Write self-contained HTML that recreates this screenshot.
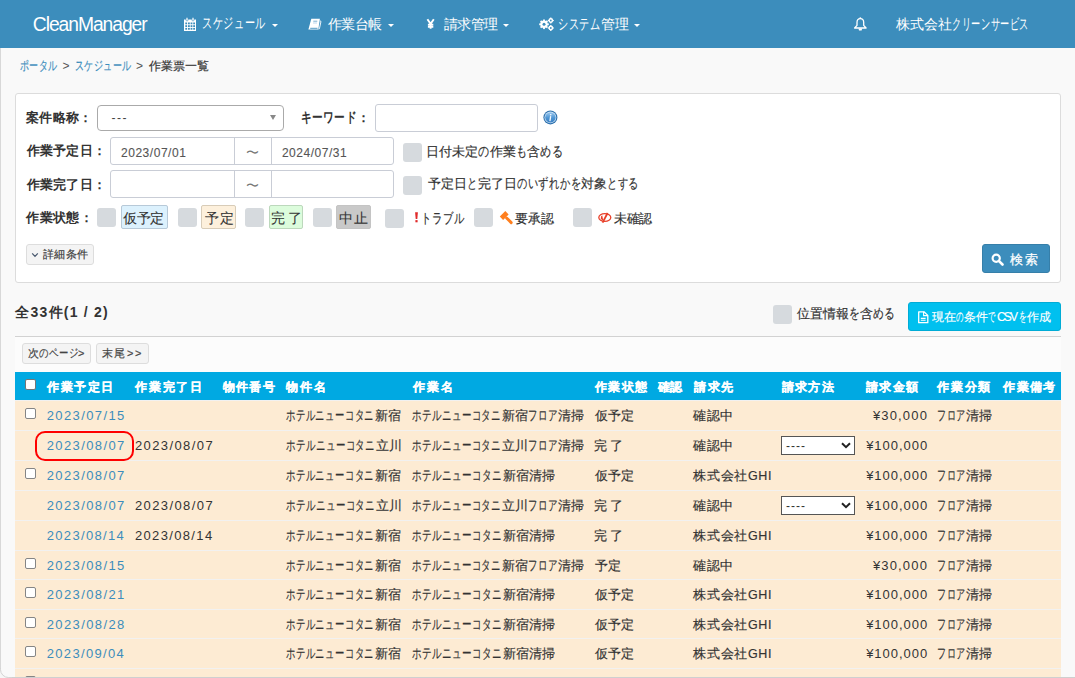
<!DOCTYPE html>
<html><head><meta charset="utf-8">
<style>
html,body{margin:0;padding:0;}
body{width:1075px;height:678px;overflow:hidden;position:relative;background:#f9f9f9;font-family:"Liberation Sans",sans-serif;}
div,svg{position:absolute;box-sizing:border-box;}
.t{position:absolute;white-space:nowrap}.kr{display:inline-block}.ki{display:inline-block;transform-origin:0 0}
#nav{left:0;top:0;width:1075px;height:48px;background:#3c8dbc;}
.caret{width:0;height:0;border-left:3px solid transparent;border-right:3px solid transparent;border-top:3px solid #fff;}
#panel{left:15px;top:93px;width:1046px;height:190px;background:#fff;border:1px solid #dcdcdc;border-radius:3px;}
.inp{background:#fff;border:1px solid #c9cdd6;border-radius:3px;}
.icb{width:19px;height:19px;background:#d6dade;border-radius:3px;}
.lab{height:24px;border:1px solid #c8c8c8;border-radius:2px;}
.btn{background:#f4f4f4;border:1px solid #ddd;border-radius:3px;}
#tbl{left:15px;top:337px;width:1046px;height:341px;background:#fcfcfc;}
#thead{left:15px;top:372px;width:1046px;height:28px;background:#00a9e2;}
.row{left:15px;width:1046px;background:#fdebd3;}
.sep{left:15px;width:1046px;height:1px;background:#f2f1f0;}
.ncb{left:25px;width:11px;height:11px;background:#fff;border:1px solid #858585;border-radius:2px;}
.nsel{left:781px;width:74px;height:19px;background:#fff;border:1px solid #555;}
.dash{position:absolute;left:4px;top:1px;font-size:12px;line-height:16px;color:#333;letter-spacing:1px;}
.chev{left:59px;top:5px;}
</style></head><body>
<div id="nav"></div>
<!-- calendar icon -->
<svg style="left:183px;top:17px" width="14" height="15" viewBox="0 0 14 15">
 <rect x="1" y="2.5" width="12" height="11.5" fill="#fff"/>
 <rect x="3" y="0.5" width="2" height="3.5" rx="1" fill="#fff" stroke="#3c8dbc" stroke-width="0.6"/>
 <rect x="9" y="0.5" width="2" height="3.5" rx="1" fill="#fff" stroke="#3c8dbc" stroke-width="0.6"/>
 <g fill="#3c8dbc">
  <rect x="2.3" y="5.5" width="1.8" height="1.8"/><rect x="5" y="5.5" width="1.8" height="1.8"/><rect x="7.6" y="5.5" width="1.8" height="1.8"/><rect x="10.2" y="5.5" width="1.8" height="1.8"/>
  <rect x="2.3" y="8.2" width="1.8" height="1.8"/><rect x="5" y="8.2" width="1.8" height="1.8"/><rect x="7.6" y="8.2" width="1.8" height="1.8"/><rect x="10.2" y="8.2" width="1.8" height="1.8"/>
  <rect x="2.3" y="10.9" width="1.8" height="1.8"/><rect x="5" y="10.9" width="1.8" height="1.8"/><rect x="7.6" y="10.9" width="1.8" height="1.8"/><rect x="10.2" y="10.9" width="1.8" height="1.8"/>
 </g>
</svg>
<div class="caret" style="left:272px;top:24px"></div>
<!-- book icon -->
<svg style="left:300px;top:10px" width="30" height="28" viewBox="0 0 30 28">
 <path d="M11.3 8.7 H19.9 L18.3 19.6 H8.4 Z" fill="#fff"/>
 <path d="M19.9 10.8 L21 11.4 L19.4 18.8 L18.6 19" stroke="#fff" stroke-width="0.9" fill="none"/>
 <path d="M10.2 18.3 H17.5" stroke="#3c8dbc" stroke-width="0.9"/>
 <rect x="13.3" y="10.6" width="4" height="1.3" fill="#9cc3dc"/>
 <rect x="13" y="12.4" width="4" height="1.2" fill="#c9def0"/>
</svg>
<div class="caret" style="left:388px;top:24px"></div>
<!-- yen -->
<svg style="left:420px;top:10px" width="25" height="28" viewBox="0 0 25 28">
 <path d="M7.4 9.2 L10.6 13.8 L13.8 9.2 M10.6 13.8 V18.8 M7.9 14.6 H13.3 M7.9 16.7 H13.3" stroke="#fff" stroke-width="1.9" fill="none"/>
</svg>
<div class="caret" style="left:503px;top:24px"></div>
<!-- gears -->
<svg style="left:538px;top:17px" width="16" height="14" viewBox="0 0 16 14">
 <g fill="#fff">
  <circle cx="6" cy="7.3" r="3.7"/>
  <g id="tth"><rect x="5.1" y="2.5" width="1.8" height="9.6"/><rect x="5.1" y="2.5" width="1.8" height="9.6" transform="rotate(45 6 7.3)"/><rect x="5.1" y="2.5" width="1.8" height="9.6" transform="rotate(90 6 7.3)"/><rect x="5.1" y="2.5" width="1.8" height="9.6" transform="rotate(135 6 7.3)"/></g>
  <circle cx="12.8" cy="3.5" r="2.4"/><circle cx="12.8" cy="11" r="2.4"/>
  <rect x="12.2" y="0.5" width="1.2" height="6"/><rect x="9.8" y="2.9" width="6" height="1.2"/>
  <rect x="12.2" y="8" width="1.2" height="6"/><rect x="9.8" y="10.4" width="6" height="1.2"/>
 </g>
 <circle cx="6" cy="7.3" r="1.5" fill="#3c8dbc"/>
 <circle cx="12.8" cy="3.5" r="0.9" fill="#3c8dbc"/><circle cx="12.8" cy="11" r="0.9" fill="#3c8dbc"/>
</svg>
<div class="caret" style="left:634px;top:24px"></div>
<!-- bell -->
<svg style="left:853px;top:16px" width="15" height="16" viewBox="0 0 15 16">
 <path d="M7.3 2.7 C5.1 2.7 4 4.4 4 6.6 V9.4 L1.6 12 H13.1 L10.7 9.4 V6.6 C10.7 4.4 9.6 2.7 7.3 2.7 Z" stroke="#fff" stroke-width="1.3" fill="none" stroke-linejoin="round"/>
 <path d="M5.5 12.5 H9.1 L8.6 14.6 H6 Z" fill="#fff"/>
 <circle cx="7.3" cy="2.2" r="0.9" fill="#fff"/>
</svg>

<div id="panel"></div>
<!-- select -->
<div class="inp" style="left:97px;top:105px;width:187px;height:26px;border-color:#aaa;border-radius:4px"></div>
<div style="left:270px;top:115px;width:0;height:0;border-left:3px solid transparent;border-right:3px solid transparent;border-top:5px solid #888"></div>
<div class="inp" style="left:375px;top:104px;width:163px;height:28px"></div>
<!-- info icon -->
<svg style="left:542px;top:109px" width="17" height="17" viewBox="0 0 17 17">
 <defs><linearGradient id="ig" x1="0" y1="0" x2="0" y2="1"><stop offset="0" stop-color="#9ccaf0"/><stop offset="0.55" stop-color="#4d95d4"/><stop offset="1" stop-color="#3a80c4"/></linearGradient></defs>
 <circle cx="8.4" cy="8.4" r="7" fill="#2b70ad"/>
 <circle cx="8.4" cy="8.4" r="5.9" fill="#cfe3f5"/>
 <circle cx="8.4" cy="8.4" r="5.2" fill="url(#ig)"/>
 <ellipse cx="8.7" cy="5.8" rx="0.9" ry="0.8" fill="#f4f8fc"/>
 <path d="M8.6 7.6 L8 11.6" stroke="#f4f8fc" stroke-width="1.3" stroke-linecap="round"/>
</svg>
<!-- date group 1 -->
<div class="inp" style="left:110px;top:137px;width:284px;height:28px"></div>
<div style="left:234px;top:138px;width:1px;height:26px;background:#c9cdd6"></div>
<div style="left:271px;top:138px;width:1px;height:26px;background:#c9cdd6"></div>
<div class="icb" style="left:403px;top:143px"></div>
<!-- date group 2 -->
<div class="inp" style="left:110px;top:170px;width:284px;height:28px"></div>
<div style="left:234px;top:171px;width:1px;height:26px;background:#c9cdd6"></div>
<div style="left:271px;top:171px;width:1px;height:26px;background:#c9cdd6"></div>
<div class="icb" style="left:403px;top:176px"></div>
<!-- status row -->
<div class="icb" style="left:97px;top:208px"></div>
<div class="lab" style="left:121px;top:205px;width:47px;background:#dcf1fd;border-color:#b7c9d8"></div>
<div class="icb" style="left:178px;top:208px"></div>
<div class="lab" style="left:201px;top:205px;width:35px;background:#fdf0dc;border-color:#d8ccb8"></div>
<div class="icb" style="left:245px;top:208px"></div>
<div class="lab" style="left:269px;top:205px;width:34px;background:#dcfcdc;border-color:#bcd8bc"></div>
<div class="icb" style="left:313px;top:208px"></div>
<div class="lab" style="left:336px;top:205px;width:35px;background:#c9c9c9;border-color:#c4c4c4"></div>
<div class="icb" style="left:385px;top:209px"></div>
<svg style="left:414px;top:212px" width="5" height="12" viewBox="0 0 5 12"><path d="M1.1 0.3 H3.9 L3.3 7 H1.7 Z" fill="#e02a2a"/><rect x="1.4" y="8.1" width="2.2" height="2.2" fill="#e02a2a"/></svg>
<div class="icb" style="left:474px;top:208px"></div>
<svg style="left:495px;top:206px" width="20" height="20" viewBox="0 0 20 20">
 <path d="M10.3 5.1 L13.6 8.5 L8.1 14 L4.8 10.6 Z" fill="#ff7f1e"/>
 <path d="M11.6 12 L16.2 16.6" stroke="#ff7f1e" stroke-width="2.9" stroke-linecap="round"/>
</svg>
<div class="icb" style="left:573px;top:208px"></div>
<svg style="left:594px;top:206px" width="20" height="20" viewBox="0 0 20 20">
 <ellipse cx="10.8" cy="11.5" rx="6" ry="3.9" stroke="#e8402a" stroke-width="1.3" fill="none"/>
 <path d="M8.2 9.3 A2.6 2.6 0 0 0 9.2 14.2 Z" fill="#e8402a"/>
 <path d="M13.6 7 L8.6 16.6" stroke="#e8402a" stroke-width="1.8"/>
</svg>
<!-- detail btn -->
<div class="btn" style="left:26px;top:244px;width:68px;height:21px"></div>
<svg style="left:31px;top:252px" width="8" height="6" viewBox="0 0 8 6"><path d="M1.2 1.4 L4 4.4 L6.8 1.4" stroke="#4a5a70" stroke-width="1.2" fill="none"/></svg>
<!-- search btn -->
<div style="left:982px;top:244px;width:68px;height:29px;background:#3c8dbc;border:1px solid #367fa9;border-radius:3px"></div>
<svg style="left:991px;top:253px" width="13" height="13" viewBox="0 0 13 13"><circle cx="5.2" cy="5.2" r="3.6" stroke="#fff" stroke-width="2.2" fill="none"/><path d="M7.8 7.8 L11.5 11.5" stroke="#fff" stroke-width="2.6" stroke-linecap="round"/></svg>

<!-- results area -->
<div id="tbl"></div>
<div style="left:15px;top:336px;width:1046px;height:1px;background:#d2d2d2"></div>
<div class="icb" style="left:773px;top:305px"></div>
<div style="left:908px;top:302px;width:153px;height:29px;background:#00c0ef;border:1px solid #00acd6;border-radius:3px"></div>
<svg style="left:917px;top:310px" width="13" height="14" viewBox="0 0 13 14">
 <path d="M1.7 1.8 H7 L10.8 5.4 V12.7 H1.7 Z" stroke="#fff" stroke-width="1.3" fill="none" stroke-linejoin="round"/>
 <path d="M6.6 1.8 V5.6 H10.8" stroke="#fff" stroke-width="1.1" fill="none"/>
 <path d="M3.8 8.4 H8.6 M3.8 10.3 H8.6" stroke="#fff" stroke-width="1.1"/>
</svg>
<div class="btn" style="left:22px;top:343px;width:69px;height:21px"></div>
<div class="btn" style="left:96px;top:343px;width:53px;height:21px"></div>

<div id="thead"></div>
<div style="left:25px;top:379px;width:11px;height:11px;background:#fff;border:1px solid #767676;border-radius:2px"></div>
<div class="row" style="top:401px;height:29px"></div><div class="sep" style="top:400px"></div><div class="ncb" style="top:408px"></div><div class="row" style="top:431px;height:29px"></div><div class="sep" style="top:430px"></div><div class="row" style="top:461px;height:29px"></div><div class="sep" style="top:460px"></div><div class="ncb" style="top:468px"></div><div class="row" style="top:491px;height:29px"></div><div class="sep" style="top:490px"></div><div class="row" style="top:521px;height:29px"></div><div class="sep" style="top:520px"></div><div class="row" style="top:551px;height:28px"></div><div class="sep" style="top:550px"></div><div class="ncb" style="top:558px"></div><div class="row" style="top:580px;height:29px"></div><div class="sep" style="top:579px"></div><div class="ncb" style="top:587px"></div><div class="row" style="top:610px;height:28px"></div><div class="sep" style="top:609px"></div><div class="ncb" style="top:617px"></div><div class="row" style="top:639px;height:29px"></div><div class="sep" style="top:638px"></div><div class="ncb" style="top:646px"></div><div class="row" style="top:669px;height:9px"></div><div class="sep" style="top:668px"></div><div class="ncb" style="top:676px"></div><div class="nsel" style="top:436px"><span class="dash">----</span><svg class="chev" width="10" height="7" viewBox="0 0 10 7"><path d="M1 1.2 L5 5.2 L9 1.2" stroke="#222" stroke-width="2" fill="none"/></svg></div><div class="nsel" style="top:496px"><span class="dash">----</span><svg class="chev" width="10" height="7" viewBox="0 0 10 7"><path d="M1 1.2 L5 5.2 L9 1.2" stroke="#222" stroke-width="2" fill="none"/></svg></div>
<!-- red circle -->
<div style="left:35px;top:431px;width:99px;height:30px;border:2px solid #f00;border-radius:10px"></div>

<span class="t" id="t0" style="left:32.80px;top:10.90px;font-size:19.3px;line-height:28.95px;font-weight:normal;color:#fff;letter-spacing:-1.055px">CleanManager</span>
<span class="t" id="t1" style="left:202.00px;top:12.30px;font-size:14px;line-height:21.00px;font-weight:normal;color:#fff"><span class="kr" style="width:64.03px"><span class="ki" style="font-size:15.00px;transform:scaleX(0.6776);letter-spacing:0.75px">スケジュール</span></span></span>
<span class="t" id="t2" style="left:328.00px;top:13.80px;font-size:14px;line-height:21.00px;font-weight:normal;color:#fff;letter-spacing:-0.667px">作業台帳</span>
<span class="t" id="t3" style="left:444.00px;top:13.80px;font-size:14px;line-height:21.00px;font-weight:normal;color:#fff;letter-spacing:-0.667px">請求管理</span>
<span class="t" id="t4" style="left:558.40px;top:12.80px;font-size:14px;line-height:21.00px;font-weight:normal;color:#fff"><span class="kr" style="width:42.49px"><span class="ki" style="font-size:15.00px;transform:scaleX(0.6744);letter-spacing:0.75px">システム</span></span>管理</span>
<span class="t" id="t5" style="left:895.50px;top:13.30px;font-size:14px;line-height:21.00px;font-weight:normal;color:#fff">株式会社<span class="kr" style="width:77.14px"><span class="ki" style="font-size:15.00px;transform:scaleX(0.6122);letter-spacing:0.75px">クリーンサービス</span></span></span>
<span class="t" id="t6" style="left:20.00px;top:56.50px;font-size:12px;line-height:18.00px;font-weight:normal;color:#3c8dbc;-webkit-text-stroke:0.17px currentColor"><span class="kr" style="width:37.84px"><span class="ki" style="font-size:13.00px;transform:scaleX(0.6930);letter-spacing:0.65px">ポータル</span></span></span>
<span class="t" id="t7" style="left:62.60px;top:56.80px;font-size:12px;line-height:18.00px;font-weight:normal;color:#555">></span>
<span class="t" id="t8" style="left:74.60px;top:56.50px;font-size:12px;line-height:18.00px;font-weight:normal;color:#3c8dbc;-webkit-text-stroke:0.17px currentColor"><span class="kr" style="width:56.81px"><span class="ki" style="font-size:13.00px;transform:scaleX(0.6937);letter-spacing:0.65px">スケジュール</span></span></span>
<span class="t" id="t9" style="left:136.00px;top:56.80px;font-size:12px;line-height:18.00px;font-weight:normal;color:#555">></span>
<span class="t" id="t10" style="left:149.00px;top:56.50px;font-size:12px;line-height:18.00px;font-weight:normal;color:#333;-webkit-text-stroke:0.17px currentColor">作業票一覧</span>
<span class="t" id="t11" style="left:25.90px;top:107.70px;font-size:13px;line-height:19.50px;font-weight:bold;color:#333;letter-spacing:0.400px">案件略称：</span>
<span class="t" id="t12" style="left:111.50px;top:108.50px;font-size:12px;line-height:18.00px;font-weight:normal;color:#444;letter-spacing:1.500px">---</span>
<span class="t" id="t13" style="left:301.30px;top:107.70px;font-size:13px;line-height:19.50px;font-weight:bold;color:#333"><span class="kr" style="width:55.82px"><span class="ki" style="font-size:14.00px;transform:scaleX(0.7595);letter-spacing:0.70px">キーワード</span></span>：</span>
<span class="t" id="t14" style="left:26.50px;top:141.10px;font-size:13px;line-height:19.50px;font-weight:bold;color:#333;letter-spacing:0.300px">作業予定日：</span>
<span class="t" id="t15" style="left:121.00px;top:143.60px;font-size:12px;line-height:18.00px;font-weight:normal;color:#555;letter-spacing:0.533px;-webkit-text-stroke:0.1px currentColor">2023/07/01</span>
<span class="t" id="t16" style="left:245.70px;top:142.50px;font-size:13px;line-height:19.50px;font-weight:normal;color:#777">〜</span>
<span class="t" id="t17" style="left:281.90px;top:143.60px;font-size:12px;line-height:18.00px;font-weight:normal;color:#555;letter-spacing:0.533px;-webkit-text-stroke:0.1px currentColor">2024/07/31</span>
<span class="t" id="t18" style="left:426.00px;top:142.10px;font-size:13px;line-height:19.50px;font-weight:normal;color:#333;-webkit-text-stroke:0.17px currentColor">日付未定<span class="kr" style="width:11.57px"><span class="ki" style="font-size:14.00px;transform:scaleX(0.7873);letter-spacing:0.70px">の</span></span>作業<span class="kr" style="width:11.57px"><span class="ki" style="font-size:14.00px;transform:scaleX(0.7873);letter-spacing:0.70px">も</span></span>含<span class="kr" style="width:23.15px"><span class="ki" style="font-size:14.00px;transform:scaleX(0.7873);letter-spacing:0.70px">める</span></span></span>
<span class="t" id="t19" style="left:26.50px;top:174.70px;font-size:13px;line-height:19.50px;font-weight:bold;color:#333;letter-spacing:0.300px">作業完了日：</span>
<span class="t" id="t20" style="left:245.70px;top:176.00px;font-size:13px;line-height:19.50px;font-weight:normal;color:#777">〜</span>
<span class="t" id="t21" style="left:428.00px;top:174.40px;font-size:13px;line-height:19.50px;font-weight:normal;color:#333;-webkit-text-stroke:0.17px currentColor">予定日<span class="kr" style="width:10.73px"><span class="ki" style="font-size:14.00px;transform:scaleX(0.7296);letter-spacing:0.70px">と</span></span>完了日<span class="kr" style="width:64.36px"><span class="ki" style="font-size:14.00px;transform:scaleX(0.7296);letter-spacing:0.70px">のいずれかを</span></span>対象<span class="kr" style="width:32.18px"><span class="ki" style="font-size:14.00px;transform:scaleX(0.7296);letter-spacing:0.70px">とする</span></span></span>
<span class="t" id="t22" style="left:26.20px;top:208.10px;font-size:13px;line-height:19.50px;font-weight:bold;color:#333;letter-spacing:0.350px">作業状態：</span>
<span class="t" id="t23" style="left:123.40px;top:208.50px;font-size:13.5px;line-height:20.25px;font-weight:normal;color:#333;letter-spacing:-0.450px;-webkit-text-stroke:0.08px currentColor">仮予定</span>
<span class="t" id="t24" style="left:204.50px;top:207.50px;font-size:14px;line-height:21.00px;font-weight:normal;color:#333;letter-spacing:1.000px;-webkit-text-stroke:0.08px currentColor">予定</span>
<span class="t" id="t25" style="left:271.00px;top:207.50px;font-size:14px;line-height:21.00px;font-weight:normal;color:#333;letter-spacing:2.500px;-webkit-text-stroke:0.08px currentColor">完了</span>
<span class="t" id="t26" style="left:338.50px;top:207.50px;font-size:14px;line-height:21.00px;font-weight:normal;color:#333;letter-spacing:1.000px;-webkit-text-stroke:0.08px currentColor">中止</span>
<span class="t" id="t27" style="left:420.80px;top:208.50px;font-size:13px;line-height:19.50px;font-weight:normal;color:#333;-webkit-text-stroke:0.17px currentColor"><span class="kr" style="width:43.60px"><span class="ki" style="font-size:14.00px;transform:scaleX(0.7415);letter-spacing:0.70px">トラブル</span></span></span>
<span class="t" id="t28" style="left:514.70px;top:208.50px;font-size:13px;line-height:19.50px;font-weight:normal;color:#333;letter-spacing:0.350px;-webkit-text-stroke:0.17px currentColor">要承認</span>
<span class="t" id="t29" style="left:613.60px;top:208.50px;font-size:13px;line-height:19.50px;font-weight:normal;color:#333;letter-spacing:-0.050px;-webkit-text-stroke:0.17px currentColor">未確認</span>
<span class="t" id="t30" style="left:42.90px;top:246.00px;font-size:11px;line-height:16.50px;font-weight:normal;color:#3a3a3a;letter-spacing:0.433px;-webkit-text-stroke:0.17px currentColor">詳細条件</span>
<span class="t" id="t31" style="left:1009.70px;top:250.50px;font-size:12.5px;line-height:18.75px;font-weight:normal;color:#fff;-webkit-text-stroke:0.25px currentColor">検</span>
<span class="t" id="t32" style="left:1024.70px;top:250.50px;font-size:12.5px;line-height:18.75px;font-weight:normal;color:#fff;-webkit-text-stroke:0.25px currentColor">索</span>
<span class="t" id="t33" style="left:15.30px;top:301.70px;font-size:14px;line-height:21.00px;font-weight:bold;color:#333;letter-spacing:1.220px">全33件(1 / 2)</span>
<span class="t" id="t34" style="left:796.70px;top:304.20px;font-size:13px;line-height:19.50px;font-weight:normal;color:#333;-webkit-text-stroke:0.17px currentColor">位置情報<span class="kr" style="width:11.22px"><span class="ki" style="font-size:14.00px;transform:scaleX(0.7636);letter-spacing:0.70px">を</span></span>含<span class="kr" style="width:22.45px"><span class="ki" style="font-size:14.00px;transform:scaleX(0.7636);letter-spacing:0.70px">める</span></span></span>
<span class="t" id="t35" style="left:932.10px;top:307.80px;font-size:12px;line-height:18.00px;font-weight:normal;color:#fff;-webkit-text-stroke:0.15px currentColor">現在<span class="kr" style="width:7.78px"><span class="ki" style="font-size:13.00px;transform:scaleX(0.5700);letter-spacing:0.65px">の</span></span>条件<span class="kr" style="width:7.78px"><span class="ki" style="font-size:13.00px;transform:scaleX(0.5700);letter-spacing:0.65px">で</span></span></span>
<span class="t" id="t36" style="left:996.90px;top:308.30px;font-size:12px;line-height:18.00px;font-weight:normal;color:#fff;letter-spacing:-1.750px;-webkit-text-stroke:0.15px currentColor">CSV</span>
<span class="t" id="t37" style="left:1018.50px;top:307.80px;font-size:12px;line-height:18.00px;font-weight:normal;color:#fff;-webkit-text-stroke:0.15px currentColor"><span class="kr" style="width:8.23px"><span class="ki" style="font-size:13.00px;transform:scaleX(0.6030);letter-spacing:0.65px">を</span></span>作成</span>
<span class="t" id="t38" style="left:27.70px;top:345.00px;font-size:11px;line-height:16.50px;font-weight:normal;color:#444;-webkit-text-stroke:0.17px currentColor">次<span class="kr" style="width:39.42px"><span class="ki" style="font-size:12.00px;transform:scaleX(0.7821);letter-spacing:0.60px">のページ</span></span>></span>
<span class="t" id="t39" style="left:101.80px;top:345.00px;font-size:11px;line-height:16.50px;font-weight:normal;color:#444;letter-spacing:1.633px;-webkit-text-stroke:0.17px currentColor">末尾>></span>
<span class="t" id="t40" style="left:47.10px;top:378.00px;font-size:12px;line-height:18.00px;font-weight:bold;color:#fff;letter-spacing:1.550px;-webkit-text-stroke:0.2px currentColor">作業予定日</span>
<span class="t" id="t41" style="left:135.40px;top:378.00px;font-size:12px;line-height:18.00px;font-weight:bold;color:#fff;letter-spacing:1.650px;-webkit-text-stroke:0.2px currentColor">作業完了日</span>
<span class="t" id="t42" style="left:222.70px;top:377.50px;font-size:12px;line-height:18.00px;font-weight:bold;color:#fff;letter-spacing:1.400px;-webkit-text-stroke:0.2px currentColor">物件番号</span>
<span class="t" id="t43" style="left:286.00px;top:377.50px;font-size:12px;line-height:18.00px;font-weight:bold;color:#fff;letter-spacing:2.050px;-webkit-text-stroke:0.2px currentColor">物件名</span>
<span class="t" id="t44" style="left:412.60px;top:377.50px;font-size:12px;line-height:18.00px;font-weight:bold;color:#fff;letter-spacing:2.000px;-webkit-text-stroke:0.2px currentColor">作業名</span>
<span class="t" id="t45" style="left:594.50px;top:377.50px;font-size:12px;line-height:18.00px;font-weight:bold;color:#fff;letter-spacing:1.500px;-webkit-text-stroke:0.2px currentColor">作業状態</span>
<span class="t" id="t46" style="left:658.30px;top:377.50px;font-size:12px;line-height:18.00px;font-weight:bold;color:#fff;-webkit-text-stroke:0.2px currentColor">確認</span>
<span class="t" id="t47" style="left:694.00px;top:377.50px;font-size:12px;line-height:18.00px;font-weight:bold;color:#fff;letter-spacing:1.650px;-webkit-text-stroke:0.2px currentColor">請求先</span>
<span class="t" id="t48" style="left:782.10px;top:378.00px;font-size:12px;line-height:18.00px;font-weight:bold;color:#fff;letter-spacing:1.167px;-webkit-text-stroke:0.2px currentColor">請求方法</span>
<span class="t" id="t49" style="left:865.50px;top:377.50px;font-size:12px;line-height:18.00px;font-weight:bold;color:#fff;letter-spacing:1.500px;-webkit-text-stroke:0.2px currentColor">請求金額</span>
<span class="t" id="t50" style="left:937.20px;top:377.50px;font-size:12px;line-height:18.00px;font-weight:bold;color:#fff;letter-spacing:1.733px;-webkit-text-stroke:0.2px currentColor">作業分類</span>
<span class="t" id="t51" style="left:1003.30px;top:377.50px;font-size:12px;line-height:18.00px;font-weight:bold;color:#fff;letter-spacing:1.400px;-webkit-text-stroke:0.2px currentColor">作業備考</span>
<span class="t" id="t52" style="left:46.70px;top:405.90px;font-size:13px;line-height:19.50px;font-weight:normal;color:#3c8dbc;letter-spacing:1.400px">2023/07/15</span>
<span class="t" id="t53" style="left:285.90px;top:405.90px;font-size:12.5px;line-height:18.75px;font-weight:normal;color:#333;-webkit-text-stroke:0.17px currentColor"><span class="kr" style="width:88.23px;margin-right:0.50px"><span class="ki" style="font-size:14.00px;transform:scaleX(0.6669);letter-spacing:0.70px">ホテルニューコタニ</span></span>新宿</span>
<span class="t" id="t54" style="left:412.10px;top:405.90px;font-size:12.5px;line-height:18.75px;font-weight:normal;color:#333;-webkit-text-stroke:0.17px currentColor"><span class="kr" style="width:89.35px;margin-right:0.50px"><span class="ki" style="font-size:14.00px;transform:scaleX(0.6753);letter-spacing:0.70px">ホテルニューコタニ</span></span>新宿<span class="kr" style="width:29.78px"><span class="ki" style="font-size:14.00px;transform:scaleX(0.6753);letter-spacing:0.70px">フロア</span></span>清掃</span>
<span class="t" id="t55" style="left:594.50px;top:405.90px;font-size:13px;line-height:19.50px;font-weight:normal;color:#333;letter-spacing:0.350px;-webkit-text-stroke:0.17px currentColor">仮予定</span>
<span class="t" id="t56" style="left:693.30px;top:406.90px;font-size:12.5px;line-height:18.75px;font-weight:normal;color:#333;letter-spacing:0.500px;-webkit-text-stroke:0.17px currentColor">確認中</span>
<span class="t" id="t57" style="left:872.90px;top:405.90px;font-size:13px;line-height:19.50px;font-weight:normal;color:#333;letter-spacing:1.167px">¥30,000</span>
<span class="t" id="t58" style="left:937.00px;top:405.90px;font-size:12.5px;line-height:18.75px;font-weight:normal;color:#333;-webkit-text-stroke:0.17px currentColor"><span class="kr" style="width:28.62px"><span class="ki" style="font-size:14.00px;transform:scaleX(0.6489);letter-spacing:0.70px">フロア</span></span>清掃</span>
<span class="t" id="t59" style="left:46.70px;top:435.90px;font-size:13px;line-height:19.50px;font-weight:normal;color:#3c8dbc;letter-spacing:1.400px">2023/08/07</span>
<span class="t" id="t60" style="left:134.90px;top:435.90px;font-size:13px;line-height:19.50px;font-weight:normal;color:#333;letter-spacing:1.411px">2023/08/07</span>
<span class="t" id="t61" style="left:285.90px;top:435.90px;font-size:12.5px;line-height:18.75px;font-weight:normal;color:#333;-webkit-text-stroke:0.17px currentColor"><span class="kr" style="width:89.27px;margin-right:0.50px"><span class="ki" style="font-size:14.00px;transform:scaleX(0.6748);letter-spacing:0.70px">ホテルニューコタニ</span></span>立川</span>
<span class="t" id="t62" style="left:412.10px;top:435.90px;font-size:12.5px;line-height:18.75px;font-weight:normal;color:#333;-webkit-text-stroke:0.17px currentColor"><span class="kr" style="width:89.35px;margin-right:0.50px"><span class="ki" style="font-size:14.00px;transform:scaleX(0.6753);letter-spacing:0.70px">ホテルニューコタニ</span></span>立川<span class="kr" style="width:29.78px"><span class="ki" style="font-size:14.00px;transform:scaleX(0.6753);letter-spacing:0.70px">フロア</span></span>清掃</span>
<span class="t" id="t63" style="left:593.50px;top:435.90px;font-size:13px;line-height:19.50px;font-weight:normal;color:#333;letter-spacing:3.000px;-webkit-text-stroke:0.17px currentColor">完了</span>
<span class="t" id="t64" style="left:693.30px;top:436.90px;font-size:12.5px;line-height:18.75px;font-weight:normal;color:#333;letter-spacing:0.500px;-webkit-text-stroke:0.17px currentColor">確認中</span>
<span class="t" id="t65" style="left:866.20px;top:435.90px;font-size:13px;line-height:19.50px;font-weight:normal;color:#333;letter-spacing:0.957px">¥100,000</span>
<span class="t" id="t66" style="left:46.70px;top:465.90px;font-size:13px;line-height:19.50px;font-weight:normal;color:#3c8dbc;letter-spacing:1.400px">2023/08/07</span>
<span class="t" id="t67" style="left:285.90px;top:465.90px;font-size:12.5px;line-height:18.75px;font-weight:normal;color:#333;-webkit-text-stroke:0.17px currentColor"><span class="kr" style="width:88.23px;margin-right:0.50px"><span class="ki" style="font-size:14.00px;transform:scaleX(0.6669);letter-spacing:0.70px">ホテルニューコタニ</span></span>新宿</span>
<span class="t" id="t68" style="left:412.10px;top:465.90px;font-size:12.5px;line-height:18.75px;font-weight:normal;color:#333;-webkit-text-stroke:0.17px currentColor"><span class="kr" style="width:90.10px;margin-right:0.50px"><span class="ki" style="font-size:14.00px;transform:scaleX(0.6810);letter-spacing:0.70px">ホテルニューコタニ</span></span>新宿清掃</span>
<span class="t" id="t69" style="left:594.50px;top:465.90px;font-size:13px;line-height:19.50px;font-weight:normal;color:#333;letter-spacing:0.350px;-webkit-text-stroke:0.17px currentColor">仮予定</span>
<span class="t" id="t70" style="left:693.30px;top:466.90px;font-size:12.5px;line-height:18.75px;font-weight:normal;color:#333;letter-spacing:0.667px;-webkit-text-stroke:0.17px currentColor">株式会社GHI</span>
<span class="t" id="t71" style="left:866.20px;top:465.90px;font-size:13px;line-height:19.50px;font-weight:normal;color:#333;letter-spacing:0.957px">¥100,000</span>
<span class="t" id="t72" style="left:937.00px;top:465.90px;font-size:12.5px;line-height:18.75px;font-weight:normal;color:#333;-webkit-text-stroke:0.17px currentColor"><span class="kr" style="width:28.62px"><span class="ki" style="font-size:14.00px;transform:scaleX(0.6489);letter-spacing:0.70px">フロア</span></span>清掃</span>
<span class="t" id="t73" style="left:46.70px;top:495.90px;font-size:13px;line-height:19.50px;font-weight:normal;color:#3c8dbc;letter-spacing:1.400px">2023/08/07</span>
<span class="t" id="t74" style="left:134.90px;top:495.90px;font-size:13px;line-height:19.50px;font-weight:normal;color:#333;letter-spacing:1.411px">2023/08/07</span>
<span class="t" id="t75" style="left:285.90px;top:495.90px;font-size:12.5px;line-height:18.75px;font-weight:normal;color:#333;-webkit-text-stroke:0.17px currentColor"><span class="kr" style="width:89.27px;margin-right:0.50px"><span class="ki" style="font-size:14.00px;transform:scaleX(0.6748);letter-spacing:0.70px">ホテルニューコタニ</span></span>立川</span>
<span class="t" id="t76" style="left:412.10px;top:495.90px;font-size:12.5px;line-height:18.75px;font-weight:normal;color:#333;-webkit-text-stroke:0.17px currentColor"><span class="kr" style="width:89.35px;margin-right:0.50px"><span class="ki" style="font-size:14.00px;transform:scaleX(0.6753);letter-spacing:0.70px">ホテルニューコタニ</span></span>立川<span class="kr" style="width:29.78px"><span class="ki" style="font-size:14.00px;transform:scaleX(0.6753);letter-spacing:0.70px">フロア</span></span>清掃</span>
<span class="t" id="t77" style="left:593.50px;top:495.90px;font-size:13px;line-height:19.50px;font-weight:normal;color:#333;letter-spacing:3.000px;-webkit-text-stroke:0.17px currentColor">完了</span>
<span class="t" id="t78" style="left:693.30px;top:496.90px;font-size:12.5px;line-height:18.75px;font-weight:normal;color:#333;letter-spacing:0.500px;-webkit-text-stroke:0.17px currentColor">確認中</span>
<span class="t" id="t79" style="left:866.20px;top:495.90px;font-size:13px;line-height:19.50px;font-weight:normal;color:#333;letter-spacing:0.957px">¥100,000</span>
<span class="t" id="t80" style="left:937.00px;top:495.90px;font-size:12.5px;line-height:18.75px;font-weight:normal;color:#333;-webkit-text-stroke:0.17px currentColor"><span class="kr" style="width:28.62px"><span class="ki" style="font-size:14.00px;transform:scaleX(0.6489);letter-spacing:0.70px">フロア</span></span>清掃</span>
<span class="t" id="t81" style="left:46.70px;top:525.90px;font-size:13px;line-height:19.50px;font-weight:normal;color:#3c8dbc;letter-spacing:1.344px">2023/08/14</span>
<span class="t" id="t82" style="left:134.90px;top:525.90px;font-size:13px;line-height:19.50px;font-weight:normal;color:#333;letter-spacing:1.356px">2023/08/14</span>
<span class="t" id="t83" style="left:285.90px;top:525.90px;font-size:12.5px;line-height:18.75px;font-weight:normal;color:#333;-webkit-text-stroke:0.17px currentColor"><span class="kr" style="width:88.23px;margin-right:0.50px"><span class="ki" style="font-size:14.00px;transform:scaleX(0.6669);letter-spacing:0.70px">ホテルニューコタニ</span></span>新宿</span>
<span class="t" id="t84" style="left:412.10px;top:525.90px;font-size:12.5px;line-height:18.75px;font-weight:normal;color:#333;-webkit-text-stroke:0.17px currentColor"><span class="kr" style="width:90.10px;margin-right:0.50px"><span class="ki" style="font-size:14.00px;transform:scaleX(0.6810);letter-spacing:0.70px">ホテルニューコタニ</span></span>新宿清掃</span>
<span class="t" id="t85" style="left:593.50px;top:525.90px;font-size:13px;line-height:19.50px;font-weight:normal;color:#333;letter-spacing:3.000px;-webkit-text-stroke:0.17px currentColor">完了</span>
<span class="t" id="t86" style="left:693.30px;top:526.90px;font-size:12.5px;line-height:18.75px;font-weight:normal;color:#333;letter-spacing:0.667px;-webkit-text-stroke:0.17px currentColor">株式会社GHI</span>
<span class="t" id="t87" style="left:866.20px;top:525.90px;font-size:13px;line-height:19.50px;font-weight:normal;color:#333;letter-spacing:0.957px">¥100,000</span>
<span class="t" id="t88" style="left:937.00px;top:525.90px;font-size:12.5px;line-height:18.75px;font-weight:normal;color:#333;-webkit-text-stroke:0.17px currentColor"><span class="kr" style="width:28.62px"><span class="ki" style="font-size:14.00px;transform:scaleX(0.6489);letter-spacing:0.70px">フロア</span></span>清掃</span>
<span class="t" id="t89" style="left:46.70px;top:555.90px;font-size:13px;line-height:19.50px;font-weight:normal;color:#3c8dbc;letter-spacing:1.400px">2023/08/15</span>
<span class="t" id="t90" style="left:285.90px;top:555.90px;font-size:12.5px;line-height:18.75px;font-weight:normal;color:#333;-webkit-text-stroke:0.17px currentColor"><span class="kr" style="width:88.23px;margin-right:0.50px"><span class="ki" style="font-size:14.00px;transform:scaleX(0.6669);letter-spacing:0.70px">ホテルニューコタニ</span></span>新宿</span>
<span class="t" id="t91" style="left:412.10px;top:555.90px;font-size:12.5px;line-height:18.75px;font-weight:normal;color:#333;-webkit-text-stroke:0.17px currentColor"><span class="kr" style="width:89.35px;margin-right:0.50px"><span class="ki" style="font-size:14.00px;transform:scaleX(0.6753);letter-spacing:0.70px">ホテルニューコタニ</span></span>新宿<span class="kr" style="width:29.78px"><span class="ki" style="font-size:14.00px;transform:scaleX(0.6753);letter-spacing:0.70px">フロア</span></span>清掃</span>
<span class="t" id="t92" style="left:594.50px;top:555.90px;font-size:13px;line-height:19.50px;font-weight:normal;color:#333;letter-spacing:0.300px;-webkit-text-stroke:0.17px currentColor">予定</span>
<span class="t" id="t93" style="left:693.30px;top:556.90px;font-size:12.5px;line-height:18.75px;font-weight:normal;color:#333;letter-spacing:0.500px;-webkit-text-stroke:0.17px currentColor">確認中</span>
<span class="t" id="t94" style="left:872.90px;top:555.90px;font-size:13px;line-height:19.50px;font-weight:normal;color:#333;letter-spacing:1.167px">¥30,000</span>
<span class="t" id="t95" style="left:937.00px;top:555.90px;font-size:12.5px;line-height:18.75px;font-weight:normal;color:#333;-webkit-text-stroke:0.17px currentColor"><span class="kr" style="width:28.62px"><span class="ki" style="font-size:14.00px;transform:scaleX(0.6489);letter-spacing:0.70px">フロア</span></span>清掃</span>
<span class="t" id="t96" style="left:46.70px;top:584.90px;font-size:13px;line-height:19.50px;font-weight:normal;color:#3c8dbc;letter-spacing:1.400px">2023/08/21</span>
<span class="t" id="t97" style="left:285.90px;top:584.90px;font-size:12.5px;line-height:18.75px;font-weight:normal;color:#333;-webkit-text-stroke:0.17px currentColor"><span class="kr" style="width:88.23px;margin-right:0.50px"><span class="ki" style="font-size:14.00px;transform:scaleX(0.6669);letter-spacing:0.70px">ホテルニューコタニ</span></span>新宿</span>
<span class="t" id="t98" style="left:412.10px;top:584.90px;font-size:12.5px;line-height:18.75px;font-weight:normal;color:#333;-webkit-text-stroke:0.17px currentColor"><span class="kr" style="width:90.10px;margin-right:0.50px"><span class="ki" style="font-size:14.00px;transform:scaleX(0.6810);letter-spacing:0.70px">ホテルニューコタニ</span></span>新宿清掃</span>
<span class="t" id="t99" style="left:594.50px;top:584.90px;font-size:13px;line-height:19.50px;font-weight:normal;color:#333;letter-spacing:0.350px;-webkit-text-stroke:0.17px currentColor">仮予定</span>
<span class="t" id="t100" style="left:693.30px;top:585.90px;font-size:12.5px;line-height:18.75px;font-weight:normal;color:#333;letter-spacing:0.667px;-webkit-text-stroke:0.17px currentColor">株式会社GHI</span>
<span class="t" id="t101" style="left:866.20px;top:584.90px;font-size:13px;line-height:19.50px;font-weight:normal;color:#333;letter-spacing:0.957px">¥100,000</span>
<span class="t" id="t102" style="left:937.00px;top:584.90px;font-size:12.5px;line-height:18.75px;font-weight:normal;color:#333;-webkit-text-stroke:0.17px currentColor"><span class="kr" style="width:28.62px"><span class="ki" style="font-size:14.00px;transform:scaleX(0.6489);letter-spacing:0.70px">フロア</span></span>清掃</span>
<span class="t" id="t103" style="left:46.70px;top:614.90px;font-size:13px;line-height:19.50px;font-weight:normal;color:#3c8dbc;letter-spacing:1.400px">2023/08/28</span>
<span class="t" id="t104" style="left:285.90px;top:614.90px;font-size:12.5px;line-height:18.75px;font-weight:normal;color:#333;-webkit-text-stroke:0.17px currentColor"><span class="kr" style="width:88.23px;margin-right:0.50px"><span class="ki" style="font-size:14.00px;transform:scaleX(0.6669);letter-spacing:0.70px">ホテルニューコタニ</span></span>新宿</span>
<span class="t" id="t105" style="left:412.10px;top:614.90px;font-size:12.5px;line-height:18.75px;font-weight:normal;color:#333;-webkit-text-stroke:0.17px currentColor"><span class="kr" style="width:90.10px;margin-right:0.50px"><span class="ki" style="font-size:14.00px;transform:scaleX(0.6810);letter-spacing:0.70px">ホテルニューコタニ</span></span>新宿清掃</span>
<span class="t" id="t106" style="left:594.50px;top:614.90px;font-size:13px;line-height:19.50px;font-weight:normal;color:#333;letter-spacing:0.350px;-webkit-text-stroke:0.17px currentColor">仮予定</span>
<span class="t" id="t107" style="left:693.30px;top:615.90px;font-size:12.5px;line-height:18.75px;font-weight:normal;color:#333;letter-spacing:0.667px;-webkit-text-stroke:0.17px currentColor">株式会社GHI</span>
<span class="t" id="t108" style="left:866.20px;top:614.90px;font-size:13px;line-height:19.50px;font-weight:normal;color:#333;letter-spacing:0.957px">¥100,000</span>
<span class="t" id="t109" style="left:937.00px;top:614.90px;font-size:12.5px;line-height:18.75px;font-weight:normal;color:#333;-webkit-text-stroke:0.17px currentColor"><span class="kr" style="width:28.62px"><span class="ki" style="font-size:14.00px;transform:scaleX(0.6489);letter-spacing:0.70px">フロア</span></span>清掃</span>
<span class="t" id="t110" style="left:46.70px;top:643.90px;font-size:13px;line-height:19.50px;font-weight:normal;color:#3c8dbc;letter-spacing:1.344px">2023/09/04</span>
<span class="t" id="t111" style="left:285.90px;top:643.90px;font-size:12.5px;line-height:18.75px;font-weight:normal;color:#333;-webkit-text-stroke:0.17px currentColor"><span class="kr" style="width:88.23px;margin-right:0.50px"><span class="ki" style="font-size:14.00px;transform:scaleX(0.6669);letter-spacing:0.70px">ホテルニューコタニ</span></span>新宿</span>
<span class="t" id="t112" style="left:412.10px;top:643.90px;font-size:12.5px;line-height:18.75px;font-weight:normal;color:#333;-webkit-text-stroke:0.17px currentColor"><span class="kr" style="width:90.10px;margin-right:0.50px"><span class="ki" style="font-size:14.00px;transform:scaleX(0.6810);letter-spacing:0.70px">ホテルニューコタニ</span></span>新宿清掃</span>
<span class="t" id="t113" style="left:594.50px;top:643.90px;font-size:13px;line-height:19.50px;font-weight:normal;color:#333;letter-spacing:0.350px;-webkit-text-stroke:0.17px currentColor">仮予定</span>
<span class="t" id="t114" style="left:693.30px;top:644.90px;font-size:12.5px;line-height:18.75px;font-weight:normal;color:#333;letter-spacing:0.667px;-webkit-text-stroke:0.17px currentColor">株式会社GHI</span>
<span class="t" id="t115" style="left:866.20px;top:643.90px;font-size:13px;line-height:19.50px;font-weight:normal;color:#333;letter-spacing:0.957px">¥100,000</span>
<span class="t" id="t116" style="left:937.00px;top:643.90px;font-size:12.5px;line-height:18.75px;font-weight:normal;color:#333;-webkit-text-stroke:0.17px currentColor"><span class="kr" style="width:28.62px"><span class="ki" style="font-size:14.00px;transform:scaleX(0.6489);letter-spacing:0.70px">フロア</span></span>清掃</span>

<!-- window border -->
<div style="left:0;top:48px;width:1px;height:630px;background:#d8d8d8"></div>
<div style="left:0;top:677px;width:1075px;height:1px;background:#cfcfcf"></div>
<svg style="left:0;top:668px" width="12" height="10" viewBox="0 0 12 10">
 <path d="M0 0 V10 H10 V9.5 H8.5 A8 8 0 0 1 0.5 1.5 V0 Z" fill="#f6f6f6"/>
 <path d="M0.5 0 V1.5 A8 8 0 0 0 8.5 9.5 H12" stroke="#d4d4d4" stroke-width="1" fill="none"/>
</svg>
</body></html>
